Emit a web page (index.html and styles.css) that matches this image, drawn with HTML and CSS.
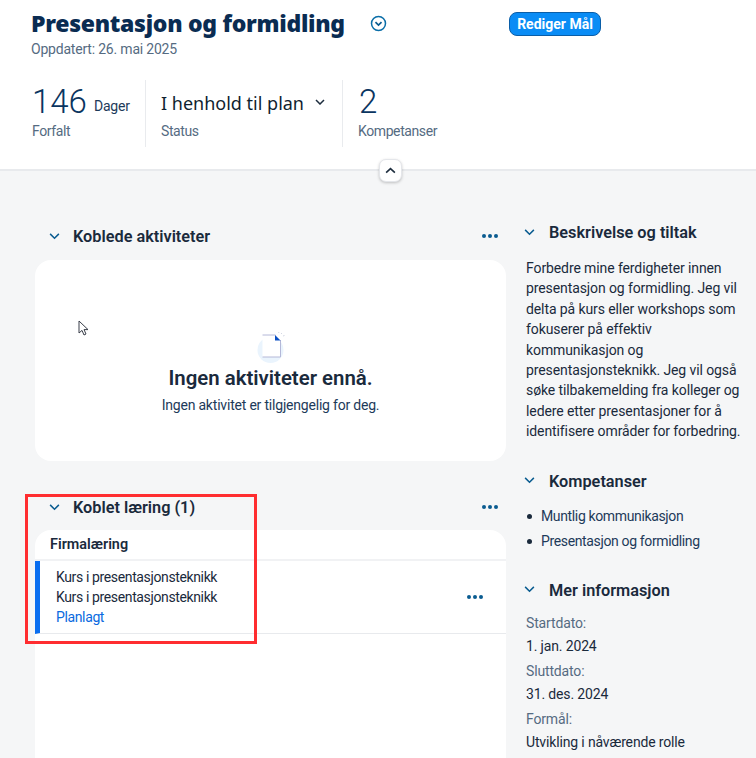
FILE: index.html
```html
<!DOCTYPE html>
<html lang="no">
<head>
<meta charset="utf-8">
<title>Presentasjon og formidling</title>
<link rel="stylesheet" href="styles.css">
</head>
<body>
<header class="top">
  <div class="title-row">
    <div class="title-block">
      <h1>Presentasjon og formidling</h1>
      <p class="updated">Oppdatert: 26. mai 2025</p>
    </div>
    <svg class="circle-icon" viewBox="0 0 18 18" width="17" height="17"><circle cx="9" cy="9" r="7.4" fill="none" stroke="#0a6ea8" stroke-width="1.6"/><path d="M5.8 7.6 9 10.6l3.2-3" fill="none" stroke="#0a5c90" stroke-width="1.8"/></svg>
    <button class="edit">Rediger Mål</button>
  </div>
  <div class="stats">
    <div class="stat stat-due">
      <div class="big"><span class="num">146</span><span class="unit">Dager</span></div>
      <div class="lab">Forfalt</div>
    </div>
    <div class="stat stat-status">
      <div class="big"><span class="plan">I henhold til plan</span><svg class="plan-chev" viewBox="0 0 10 6" width="10" height="6"><path d="M1 1l4 4 4-4" fill="none" stroke="#1d2d3e" stroke-width="1.5"/></svg></div>
      <div class="lab">Status</div>
    </div>
    <div class="stat stat-comp">
      <div class="big"><span class="num">2</span></div>
      <div class="lab">Kompetanser</div>
    </div>
  </div>
  <button class="collapse"><svg viewBox="0 0 12 8" width="11" height="7"><path d="M1 6.5 6 1.8l5 4.7" fill="none" stroke="#1d2d3e" stroke-width="1.8"/></svg></button>
</header>

<main class="content">
  <div class="left">
    <section class="sec sec-act">
      <div class="sec-head">
        <svg class="chev" viewBox="0 0 12 8" width="11" height="7"><path d="M1 1l5 5 5-5" fill="none" stroke="#0a5c90" stroke-width="1.7"/></svg>
        <h2>Koblede aktiviteter</h2>
        <span class="dots"><i></i><i></i><i></i></span>
      </div>
      <div class="card empty">
        <svg class="doc" viewBox="0 0 30 34" width="30" height="34">
          <circle cx="14.500" cy="20" r="13" fill="#eaf4fd"/>
          <path d="M6.500 5h13l5 5v17h-18z" fill="#fff"/>
          <path d="M6.500 5h13M24.500 10v17M6.500 27h18" fill="none" stroke="#b4b8d8" stroke-width="1"/>
          <path d="M19 5l5.500 5.500H19z" fill="#0a4fc4"/>
          <path d="M25 4l1-1M27 6l1.500-.5M22.500 3l.5-1" stroke="#d4d8e4" stroke-width="1"/>
        </svg>
        <h3>Ingen aktiviteter ennå.</h3>
        <p>Ingen aktivitet er tilgjengelig for deg.</p>
      </div>
    </section>
    <section class="sec">
      <div class="sec-head sec-head-learn">
        <svg class="chev" viewBox="0 0 12 8" width="11" height="7"><path d="M1 1l5 5 5-5" fill="none" stroke="#0a5c90" stroke-width="1.7"/></svg>
        <h2>Koblet læring (1)</h2>
        <span class="dots"><i></i><i></i><i></i></span>
      </div>
      <div class="card learn">
        <h4>Firmalæring</h4>
        <div class="item">
          <div class="item-text">
            <div>Kurs i presentasjonsteknikk</div>
            <div>Kurs i presentasjonsteknikk</div>
            <div class="blue">Planlagt</div>
          </div>
          <span class="dots"><i></i><i></i><i></i></span>
        </div>
      </div>
    </section>
  </div>
  <aside class="right">
    <section class="side side-desc">
      <div class="sec-head side-head">
        <svg class="chev" viewBox="0 0 12 8" width="11" height="7"><path d="M1 1l5 5 5-5" fill="none" stroke="#0a5c90" stroke-width="1.7"/></svg>
        <h2>Beskrivelse og tiltak</h2>
      </div>
      <p class="desc">Forbedre mine ferdigheter innen presentasjon og formidling. Jeg vil delta på kurs eller workshops som fokuserer på effektiv kommunikasjon og presentasjonsteknikk. Jeg vil også søke tilbakemelding fra kolleger og ledere etter presentasjoner for å identifisere områder for forbedring.</p>
    </section>
    <section class="side side-comp">
      <div class="sec-head side-head">
        <svg class="chev" viewBox="0 0 12 8" width="11" height="7"><path d="M1 1l5 5 5-5" fill="none" stroke="#0a5c90" stroke-width="1.7"/></svg>
        <h2>Kompetanser</h2>
      </div>
      <ul>
        <li>Muntlig kommunikasjon</li>
        <li>Presentasjon og formidling</li>
      </ul>
    </section>
    <section class="side side-info">
      <div class="sec-head side-head">
        <svg class="chev" viewBox="0 0 12 8" width="11" height="7"><path d="M1 1l5 5 5-5" fill="none" stroke="#0a5c90" stroke-width="1.7"/></svg>
        <h2>Mer informasjon</h2>
      </div>
      <dl>
        <dt>Startdato:</dt><dd>1. jan. 2024</dd>
        <dt>Sluttdato:</dt><dd>31. des. 2024</dd>
        <dt>Formål:</dt><dd>Utvikling i nåværende rolle</dd>
      </dl>
    </section>
  </aside>
</main>

<div class="redbox"></div>
<svg class="cursor" viewBox="0 0 12 17" width="12" height="17"><path d="M1 1v12l3-2.600 2 4.600 2-1-2-4.400h4z" fill="#fff" stroke="#3a3f4a" stroke-width="1"/></svg>
</body>
</html>
```

FILE: styles.css
```css
* { box-sizing: border-box; }
html, body { margin: 0; padding: 0; }
body {
  width: 756px;
  height: 758px;
  overflow: hidden;
  position: relative;
  background: #f5f6f7;
  font-family: Roboto, "Liberation Sans", sans-serif;
  color: #1d2d3e;
  font-size: 14px;
}
h1, h2, h3, h4, p, ul, dl, dd { margin: 0; padding: 0; }
.top {
  position: relative;
  height: 171px;
  background: #fff;
  border-bottom: 2px solid #e8eaed;
  padding: 7px 0 0 31px;
}
.title-row { display: flex; align-items: flex-start; }
.title-block { width: 338px; }
h1 {
  font-family: "Noto Sans", sans-serif;
  font-size: 23px;
  line-height: 32px;
  font-weight: 900;
  color: #0a2c52;
  white-space: nowrap;
  letter-spacing: -0.3px;
}
.updated {
  font-size: 14px;
  letter-spacing: -0.2px;
  line-height: 20px;
  color: #556b82;
  white-space: nowrap;
}
.circle-icon { margin: 8px 0 0 1px; flex: none; }
.edit {
  margin: 5px 0 0 122px;
  height: 24px;
  width: 92px;
  padding: 0;
  border: 1px solid #0a5ea8;
  border-radius: 8px;
  background: #0a8cf5;
  color: #fff;
  font: 700 14px/1 Roboto, sans-serif;
}
.stats { display: flex; margin-top: 21px; }
.stat { height: 67px; }
.stat-due { width: 114px; }
.stat-status { width: 198px; border-left: 1px solid #e9ebee; border-right: 1px solid #e9ebee; padding-left: 15px; }
.stat-comp { padding-left: 15px; }
.big { height: 42px; display: flex; align-items: center; white-space: nowrap; }
.num { font-size: 33px; font-weight: 300; color: #0a3560; line-height: 42px; margin: 2px 0 0 1px; }
.unit { font-size: 14px; letter-spacing: -0.2px; margin: 10px 0 0 7px; color: #1d3a5a; }
.plan { font-family: "Noto Sans", sans-serif; font-size: 18px; color: #101f30; padding-top: 3px; }
.plan-chev { margin: 2px 0 0 11px; }
.lab { font-size: 14px; letter-spacing: -0.4px; line-height: 18px; color: #556b82; margin-left: 1px; }
.stat-status .lab, .stat-comp .lab { margin-left: 0; }
.collapse {
  position: absolute;
  left: 379px;
  top: 159px;
  width: 23px;
  height: 23px;
  padding: 0;
  border: 1px solid #e4e6ea;
  border-radius: 7px;
  background: #fff;
  box-shadow: 0 1px 3px rgba(0,0,0,.22);
  display: flex;
  align-items: center;
  justify-content: center;
}
.content { display: flex; padding: 0 0 0 35px; }
.left { width: 471px; flex: none; }
.right { margin-left: 20px; width: 225px; flex: none; }
.sec-head { display: flex; align-items: center; height: 26px; padding-left: 14px; }
.sec-act .sec-head { margin-top: 52px; margin-bottom: 11px; }
.sec-head-learn { margin-top: 33px; margin-bottom: 10px; }
.chev { flex: none; }
h2 { font-size: 16.3px; font-weight: 600; line-height: 26px; padding-top: 2px; margin-left: 13px; color: #1a2a3c; white-space: nowrap; }
.dots { margin-left: auto; margin-right: 8px; display: flex; gap: 2px; }
.dots i { width: 4px; height: 4px; border-radius: 50%; background: #0a5c90; display: block; }
.card { background: #fff; border-radius: 16px; }
.empty { height: 201px; display: flex; flex-direction: column; align-items: center; padding-top: 70px; }
.doc { display: block; }
.empty h3 { font-size: 20.4px; font-weight: 600; line-height: 26px; margin-top: 1px; color: #1a2a3c; }
.empty p { margin-top: 4px; line-height: 20px; font-size: 14px; letter-spacing: -0.2px; color: #1d3a5a; }
.learn { height: 240px; border-radius: 16px 16px 0 0; }
.learn h4 { font-size: 14.4px; font-weight: 600; height: 31px; line-height: 30px; padding-left: 15px; border-bottom: 2px solid #f1f2f4; color: #1a2a3c; }
.item { display: flex; align-items: center; height: 73px; border-left: 5px solid #0a6ef0; border-bottom: 1px solid #e8eaed; padding-left: 16px; }
.item-text { font-size: 14px; letter-spacing: -0.37px; line-height: 20px; white-space: nowrap; color: #1a2a3c; }
.blue { color: #0a6ae0; }
.item .dots { margin-right: 23px; }
.side-head { padding-left: 0; }
.side-head .chev { margin-left: -2px; }
.side-head h2 { margin-left: 14px; }
.side-desc .side-head { margin-top: 48px; }
.desc { margin-top: 13px; font-size: 14px; letter-spacing: -0.1px; line-height: 20.4px; color: #1a2a3c; width: 218px; }
.side-comp .side-head { margin-top: 26px; }
ul { list-style: none; margin-top: 9px; }
li { font-size: 14px; letter-spacing: -0.36px; line-height: 26px; padding-left: 15px; position: relative; color: #1d3a5a; white-space: nowrap; }
li + li { margin-top: -1px; }
li::before { content: ""; position: absolute; left: 1px; top: 11px; width: 5px; height: 5px; border-radius: 50%; background: #1a2a3c; }
.side-info .side-head { margin-top: 23px; }
dl { margin-top: 8px; font-size: 14px; letter-spacing: -0.15px; }
dt { line-height: 24px; color: #556b82; white-space: nowrap; }
dd { line-height: 24px; margin: -1px 0 1px; color: #1a2a3c; white-space: nowrap; }
.redbox {
  position: absolute;
  left: 25px;
  top: 494px;
  width: 232px;
  height: 150px;
  border: 3px solid #ff2d30;
}
.cursor { position: absolute; left: 78px; top: 320px; }
```
